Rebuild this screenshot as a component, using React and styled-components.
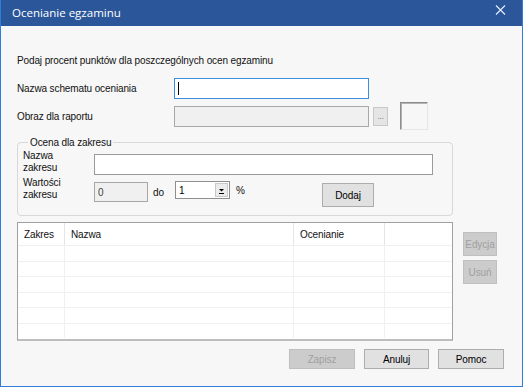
import React from "react";
import styled, { createGlobalStyle } from "styled-components";

const GlobalStyle = createGlobalStyle`
  html, body {
    margin: 0;
    padding: 0;
    background: #ffffff;
  }
  * {
    box-sizing: border-box;
  }
`;

const Window = styled.div`
  width: 523px;
  height: 387px;
  display: flex;
  flex-direction: column;
  background: #f7f7f7;
  border: 1px solid #2f7fd8;
  border-top: none;
  font-family: "Liberation Sans", Arial, sans-serif;
  font-size: 10px;
  letter-spacing: -0.12px;
  color: #111;
`;

const TitleBar = styled.div`
  height: 26px;
  flex: none;
  background: #2b579a;
  display: flex;
  align-items: center;
  justify-content: space-between;
  padding: 0 16px 2px 11px;
  color: #ffffff;
  font-family: "Open Sans", "Noto Sans", sans-serif;
  font-size: 11.5px;
  letter-spacing: 0;
`;

const CloseIcon = styled.svg`
  width: 11px;
  height: 10px;
  margin-top: -5px;
`;

const Body = styled.div`
  display: flex;
  flex-direction: column;
  padding: 28px 18px 0 16px;
`;

const Intro = styled.div`
  line-height: 13px;
`;

const FormRow = styled.div`
  display: flex;
  align-items: center;
  margin-top: ${p => p.$top || 0}px;
  height: ${p => p.$height}px;
`;

const Label = styled.div`
  width: ${p => p.$width}px;
  line-height: ${p => p.$lh || 13}px;
  flex: none;
`;

const TextInput = styled.div`
  width: ${p => (p.$width ? `${p.$width}px` : "auto")};
  flex: ${p => (p.$width ? "none" : "1")};
  height: ${p => p.$height || 21}px;
  margin-top: ${p => p.$top || 0}px;
  background: ${p => (p.$disabled ? "#f0f0f0" : "#ffffff")};
  border: 1px solid ${p => (p.$focused ? "#3d8ee0" : p.$disabled ? "#a8a8a8" : "#9a9a9a")};
  display: flex;
  align-items: center;
  padding-left: 3px;
  color: ${p => (p.$disabled ? "#444" : "#000")};
`;

const Caret = styled.span`
  width: 1px;
  height: 13px;
  background: #000;
`;

const EllipsisButton = styled.div`
  width: 15px;
  height: 19px;
  margin-left: 4px;
  background: #e5e5e5;
  border: 1px solid #c8c8c8;
  display: flex;
  align-items: flex-end;
  justify-content: center;
  padding-bottom: 4px;
  font-size: 9px;
  line-height: 9px;
  color: #9a7aa6;
  letter-spacing: -0.5px;
`;

const ImageBox = styled.div`
  width: 28px;
  height: 28px;
  margin-left: 12px;
  border: 1px solid;
  border-color: #8c8c8c #e6e6e6 #e6e6e6 #8c8c8c;
  box-shadow: inset 1px 1px 0 #b4b4b4;
  background: #f7f7f7;
`;

const Group = styled.fieldset`
  margin: 6px 0 0 0;
  width: 436px;
  padding: 1px 19px 8px 5px;
  border: 1px solid #d8d8d8;
  border-radius: 4px;
  min-inline-size: 0;
`;

const Legend = styled.legend`
  padding: 0 2px;
  margin-left: 5px;
  line-height: 13px;
`;

const GroupRow = styled.div`
  display: flex;
  align-items: flex-start;
  margin-top: ${p => p.$top || 0}px;
`;

const Small = styled.span`
  margin: ${p => p.$margin};
  line-height: 13px;
  font-weight: normal;
  color: #111;
  align-self: flex-start;
  margin-top: ${p => p.$top}px;
`;

const Combo = styled.div`
  width: 55px;
  height: 18px;
  margin-top: 4px;
  margin-left: 11px;
  background: #ffffff;
  border: 1px solid #8f8f8f;
  display: flex;
  align-items: center;
  padding: 1px 1px 1px 3px;
  color: #000;
`;

const ComboValue = styled.span`
  flex: 1;
`;

const ComboArrow = styled.div`
  width: 13px;
  height: 14px;
  background: #ececec;
  border: 1px solid #c9c9c9;
  display: flex;
  align-items: center;
  justify-content: center;
`;

const Button = styled.div`
  width: ${p => p.$width}px;
  height: ${p => p.$height || 20}px;
  margin-top: ${p => p.$top || 0}px;
  margin-left: ${p => p.$left || "0px"};
  margin-right: ${p => p.$right || 0}px;
  flex: none;
  display: flex;
  align-items: center;
  justify-content: center;
  background: ${p => (p.$disabled ? "#cccccc" : "#e1e1e1")};
  border: 1px solid ${p => (p.$disabled ? "#bfbfbf" : "#adadad")};
  color: ${p => (p.$disabled ? "#a0a0a0" : "#000")};
`;

const ListArea = styled.div`
  display: flex;
  margin-top: 6px;
`;

const List = styled.div`
  width: 436px;
  height: 119px;
  background: #ffffff;
  border: 1px solid #a0a0a0;
  border-bottom: 2px solid #bdbdbd;
  display: grid;
  grid-template-columns: 47px 229px 91px 1fr;
  grid-auto-rows: 15.5px;
  grid-template-rows: 22px;
  overflow: hidden;
`;

const HeadCell = styled.div`
  padding: 5px 0 0 6px;
  border-right: 1px solid ${p => (p.$last ? "transparent" : "#e5e5e5")};
  line-height: 13px;
`;

const Cell = styled.div`
  border-top: 1px solid #f0f0f0;
  border-right: 1px solid ${p => (p.$last ? "transparent" : "#f0f0f0")};
`;

const SideButtons = styled.div`
  display: flex;
  flex-direction: column;
  gap: 4px;
  margin: 10px 0 0 10px;
`;

const Footer = styled.div`
  display: flex;
  justify-content: flex-end;
  gap: 9px;
  margin-top: 8px;
`;

const columns = ["Zakres", "Nazwa", "Ocenianie", ""];
const rows = [0, 1, 2, 3, 4, 5];

export default function App() {
  return (
    <>
      <GlobalStyle />
      <Window>
        <TitleBar>
          <span>Ocenianie egzaminu</span>
          <CloseIcon viewBox="0 0 11 10">
            <path d="M1 0.5 L10 9.5 M10 0.5 L1 9.5" stroke="#e8eef7" strokeWidth="1.1" fill="none" />
          </CloseIcon>
        </TitleBar>
        <Body>
          <Intro>Podaj procent punktów dla poszczególnych ocen egzaminu</Intro>
          <FormRow $top={11} $height={21}>
            <Label $width={157}>Nazwa schematu oceniania</Label>
            <TextInput $width={195} $focused>
              <Caret />
            </TextInput>
          </FormRow>
          <FormRow $top={3} $height={28}>
            <Label $width={157}>Obraz dla raportu</Label>
            <TextInput $width={195} $disabled />
            <EllipsisButton>...</EllipsisButton>
            <ImageBox />
          </FormRow>
          <Group>
            <Legend>Ocena dla zakresu</Legend>
            <GroupRow>
              <Label $width={71} $lh={12}>Nazwa<br />zakresu</Label>
              <TextInput $top={4} />
            </GroupRow>
            <GroupRow $top={2}>
              <Label $width={71} $lh={12}>Wartości<br />zakresu</Label>
              <TextInput $width={54} $height={20} $top={5} $disabled>0</TextInput>
              <Small $margin="0 0 0 5px" $top={9}>do</Small>
              <Combo>
                <ComboValue>1</ComboValue>
                <ComboArrow>
                  <svg width="7" height="7" viewBox="0 0 7 7">
                    <path d="M1 2 L6 2 L3.5 4.5 Z" fill="#000" />
                    <path d="M1 6.5 L6 6.5" stroke="#000" strokeWidth="1" />
                  </svg>
                </ComboArrow>
              </Combo>
              <Small $margin="0 0 0 6px" $top={7}>%</Small>
              <Button $width={52} $height={24} $top={6} $left="auto" $right={59}>Dodaj</Button>
            </GroupRow>
          </Group>
          <ListArea>
            <List>
              {columns.map((c, i) => (
                <HeadCell key={i} $last={i === 3}>{c}</HeadCell>
              ))}
              {rows.map(r =>
                columns.map((c, i) => <Cell key={`${r}-${i}`} $last={i === 3} />)
              )}
            </List>
            <SideButtons>
              <Button $width={34} $height={24} $disabled>Edycja</Button>
              <Button $width={34} $height={24} $disabled>Usuń</Button>
            </SideButtons>
          </ListArea>
          <Footer>
            <Button $width={66} $disabled>Zapisz</Button>
            <Button $width={65}>Anuluj</Button>
            <Button $width={66}>Pomoc</Button>
          </Footer>
        </Body>
      </Window>
    </>
  );
}
